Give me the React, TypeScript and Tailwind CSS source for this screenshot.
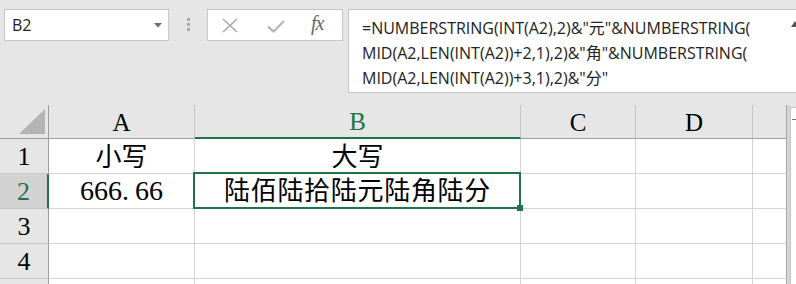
import React from "react";

const serif = "font-['Liberation_Serif','Noto_Sans_CJK_SC',serif]";

function ColHead({ label, cls }: { label: string; cls: string }) {
  return (
    <div className={`flex items-end justify-center bg-[#e6e6e6] border-r border-[#c4c4c4] ${cls}`}>
      <span className={`${serif} text-[25px] leading-none pb-[3px]`}>{label}</span>
    </div>
  );
}

function RowHead({ n, sel }: { n: string; sel?: boolean }) {
  return (
    <div
      className={
        sel
          ? "flex items-end justify-center bg-[#d2d2d2] border-b border-[#c8c8c8] border-r-2 border-r-[#217346] text-[#217346]"
          : "flex items-end justify-center bg-[#e6e6e6] border-b border-[#c8c8c8] border-r border-r-[#9e9e9e] text-black"
      }
    >
      <span className={`${serif} text-[26px] leading-none pb-[3px]`}>{n}</span>
    </div>
  );
}

function Cell({ children, last }: { children?: React.ReactNode; last?: boolean }) {
  return (
    <div
      className={
        last
          ? "bg-white border-b border-[#d4d4d4] border-r border-r-[#a6a6a6]"
          : "flex items-end justify-center bg-white border-b border-r border-[#d4d4d4] overflow-visible whitespace-nowrap"
      }
    >
      {children}
    </div>
  );
}

export default function App() {
  return (
    <div className="w-[796px] h-[284px] overflow-hidden bg-[#e6e6e6] relative">
      {/* Top bar */}
      <div className="h-[105px] flex items-start pt-[9px] relative">
        {/* Name box */}
        <div className="ml-[4px] w-[165px] h-[32px] bg-white border border-[#c6c6c6] flex items-center pl-[7px] relative shrink-0">
          <span className="font-['Open_Sans',sans-serif] text-[16px] text-[#222] leading-none">B2</span>
          <svg className="absolute left-[149px] top-[13px]" width="8" height="5" viewBox="0 0 8 5">
            <path d="M0 0 L8 0 L4 4.5 Z" fill="#6d6d6d" />
          </svg>
        </div>
        {/* dots */}
        <div className="w-[38px] h-[32px] shrink-0 flex flex-col items-center pt-[9px] gap-[2px] pl-[1px]">
          <div className="w-[3px] h-[3px] bg-[#a8a8a8]" />
          <div className="w-[3px] h-[3px] bg-[#a8a8a8]" />
          <div className="w-[3px] h-[3px] bg-[#a8a8a8]" />
        </div>
        {/* buttons */}
        <div className="w-[136px] h-[32px] bg-white border border-[#c6c6c6] shrink-0 relative">
          <svg className="absolute left-[14px] top-[8px]" width="16" height="15" viewBox="0 0 16 15">
            <path d="M1 1 L15 14 M15 1 L1 14" stroke="#a8a8a8" strokeWidth="1.6" fill="none" />
          </svg>
          <svg className="absolute left-[59px] top-[10px]" width="18" height="13" viewBox="0 0 18 13">
            <path d="M1 6.5 L6.5 11.5 L17 1" stroke="#b8b8b8" strokeWidth="2.4" fill="none" />
          </svg>
          <span className="absolute left-[103px] top-[3px] font-['Liberation_Serif',serif] italic text-[20px] text-[#666] leading-none tracking-[-1px]">
            fx
          </span>
        </div>
        {/* formula */}
        <div className="ml-[5px] w-[470px] h-[84px] bg-white border border-[#c6c6c6] shrink-0 pl-[13px] pt-[6px] relative">
          <div className="font-['Open_Sans','Noto_Sans_CJK_SC',sans-serif] text-[16px] leading-[25px] text-[#222] whitespace-nowrap">
            <div className="h-[25px] flex items-center">=NUMBERSTRING(INT(A2),2)&amp;"元"&amp;NUMBERSTRING(</div>
            <div className="h-[25px] flex items-center">MID(A2,LEN(INT(A2))+2,1),2)&amp;"角"&amp;NUMBERSTRING(</div>
            <div className="h-[25px] flex items-center">MID(A2,LEN(INT(A2))+3,1),2)&amp;"分"</div>
          </div>
          <svg className="absolute left-[442px] top-[11px]" width="8" height="6" viewBox="0 0 8 6">
            <path d="M0 6 L4 0 L8 6 Z" fill="#555" />
          </svg>
        </div>
      </div>

      {/* Grid */}
      <div className="flex">
        <div className="relative">
          <div className="grid grid-cols-[49px_146px_326px_115px_117px_34px] grid-rows-[34px_35px_35px_35px_35px_35px]">
            {/* header row */}
            <div className="bg-[#e6e6e6] border-r border-r-[#9e9e9e] border-b border-b-[#9e9e9e] relative">
              <svg className="absolute left-[19px] top-[4px]" width="26" height="26" viewBox="0 0 26 26">
                <path d="M0 25 L26 25 L26 0 Z" fill="#b4b4b4" />
              </svg>
            </div>
            <ColHead label="A" cls="border-b border-b-[#9e9e9e] text-black" />
            <ColHead label="B" cls="bg-[#d2d2d2] border-b-2 border-b-[#217346] text-[#217346]" />
            <ColHead label="C" cls="border-b border-b-[#9e9e9e] text-black" />
            <ColHead label="D" cls="border-b border-b-[#9e9e9e] text-black" />
            <ColHead label="" cls="border-b border-b-[#9e9e9e] border-r-[#a6a6a6]" />

            {/* row 1 */}
            <RowHead n="1" />
            <Cell>
              <span className={`${serif} text-[26px] leading-none pb-[2px]`}>小写</span>
            </Cell>
            <Cell>
              <span className={`${serif} text-[26px] leading-none pb-[2px]`}>大写</span>
            </Cell>
            <Cell />
            <Cell />
            <Cell last />

            {/* row 2 */}
            <RowHead n="2" sel />
            <Cell>
              <span className={`${serif} text-[28px] leading-none pb-[3px]`}>
                666.<span className="ml-[6px]">66</span>
              </span>
            </Cell>
            <Cell>
              <span className={`${serif} text-[26px] leading-none pb-[3px] tracking-[0.7px]`}>陆佰陆拾陆元陆角陆分</span>
            </Cell>
            <Cell />
            <Cell />
            <Cell last />

            {/* row 3 */}
            <RowHead n="3" />
            <Cell />
            <Cell />
            <Cell />
            <Cell />
            <Cell last />

            {/* row 4 */}
            <RowHead n="4" />
            <Cell />
            <Cell />
            <Cell />
            <Cell />
            <Cell last />

            {/* row 5 (only its top edge is visible) */}
            <RowHead n="" />
            <Cell />
            <Cell />
            <Cell />
            <Cell />
            <Cell last />
          </div>
          {/* selection */}
          <div className="absolute left-[193px] top-[67px] w-[328px] h-[37px] border-2 border-[#217346] pointer-events-none" />
          <div className="absolute left-[517px] top-[100px] w-[6px] h-[6px] bg-[#217346]" />
        </div>
        {/* scrollbar edge */}
        <div className="w-[3px] bg-[#d6d6d6] shrink-0" />
        <div className="flex-1 mt-[2px] bg-white border-l border-t border-[#c6c6c6] relative">
          <div className="absolute left-[1px] top-[11px] w-[4px] h-[1px] bg-[#777]" />
        </div>
      </div>
    </div>
  );
}
